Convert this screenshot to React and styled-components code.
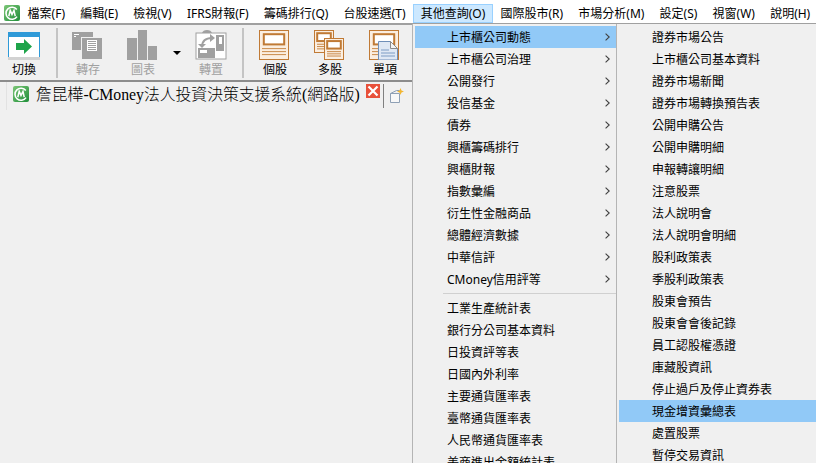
import React from 'react'
import styled, { createGlobalStyle } from 'styled-components'

const UI_FONT = '"Noto Sans", "Noto Sans CJK TC", sans-serif'

const GlobalStyle = createGlobalStyle`
  html, body {
    margin: 0;
    padding: 0;
    background: #f0f0f0;
  }
  body {
    font-family: ${UI_FONT};
    font-size: 12px;
    color: #000;
  }
`

const Page = styled.div`
  position: relative;
  width: 816px;
  height: 463px;
  overflow: hidden;
  background: #f0f0f0;
`

const MenuBar = styled.div`
  display: flex;
  align-items: flex-end;
  height: 23px;
  padding-left: 4px;
  background: #fff;
  border-bottom: 2px solid #a0a0a0;
`

const LogoSlot = styled.div`
  display: flex;
  width: 16px;
  height: 16px;
  margin-bottom: 2px;
`

const MenuTitle = styled.div`
  box-sizing: border-box;
  height: 19px;
  line-height: 17px;
  padding: 0 6.6px;
  white-space: nowrap;
  border: 1px solid ${p => (p.$open ? '#99d1ff' : 'transparent')};
  background: ${p => (p.$open ? '#cce8ff' : 'transparent')};
`

const Toolbar = styled.div`
  display: flex;
  align-items: flex-start;
  height: 57px;
  padding: 3px 0 0 8px;
  box-sizing: border-box;
  border-bottom: 2px solid #8c8c8c;
`

const ToolGroup = styled.div`
  display: flex;
  align-items: flex-start;
  gap: ${p => p.$gap}px;
`

const Tool = styled.div`
  display: flex;
  flex-direction: column;
  align-items: center;
  width: 32px;
  padding-top: 2px;
`

const ToolIcon = styled.div`
  display: flex;
  width: 32px;
  height: 30px;
`

const ToolLabel = styled.div`
  margin-top: 1px;
  line-height: 17px;
  white-space: nowrap;
  color: ${p => (p.$disabled ? '#a0a0a0' : '#000')};
`

const Divider = styled.div`
  width: 2px;
  height: 50px;
  margin: 0 ${p => p.$right}px 0 ${p => p.$left}px;
  background: #c4c4c4;
`

const Caret = styled.div`
  width: 0;
  height: 0;
  margin-top: 23px;
  border-left: 4px solid transparent;
  border-right: 4px solid transparent;
  border-top: 4px solid #000;
`

const TabStrip = styled.div`
  display: flex;
  align-items: flex-start;
  height: 26px;
  margin-left: 6px;
  padding: 2px 0 0 6px;
  border-left: 1px solid #e2e2e2;
`

const TabLogo = styled.div`
  display: flex;
  width: 16px;
  height: 16px;
  margin-top: 2px;
`

const TabTitle = styled.div`
  width: 330px;
  margin-left: 7px;
  font-family: "Liberation Serif", "Noto Sans CJK TC", serif;
  font-size: 15.8px;
  font-weight: 300;
  line-height: 22px;
  white-space: nowrap;
`

const TabClose = styled.div`
  display: flex;
  width: 14px;
  height: 14px;
`

const TabDivider = styled.div`
  width: 1px;
  height: 24px;
  margin: 0 6px 0 3px;
  background: #808080;
`

const NewTab = styled.div`
  display: flex;
  width: 15px;
  height: 15px;
  margin-top: 4px;
`

const Dropdown = styled.div`
  position: absolute;
  top: 24px;
  left: ${p => p.$left}px;
  bottom: 0;
  width: ${p => p.$width}px;
  box-sizing: border-box;
  padding: 2px 0 0 2px;
  background: #f0f0f0;
  border-left: 1px solid #b4b4b4;
`

const Row = styled.div`
  display: flex;
  align-items: center;
  justify-content: space-between;
  height: 22px;
  padding: 0 6px 0 ${p => p.$indent}px;
  white-space: nowrap;
  background: ${p => (p.$active ? '#91c9f7' : 'transparent')};
`

const Rule = styled.div`
  height: 1px;
  margin: 3px 0 3px 28px;
  background: #d0d0d0;
`

const Logo = () => (
  <svg width="16" height="16" viewBox="0 0 16 16">
    <defs>
      <linearGradient id="logoFill" x1="0" y1="0" x2="1" y2="1">
        <stop offset="0" stopColor="#7cc576" />
        <stop offset="1" stopColor="#1f8f3a" />
      </linearGradient>
    </defs>
    <rect width="16" height="16" rx="2" fill="url(#logoFill)" />
    <path d="M12.8 4.6A6 6 0 1 0 13 11.6" fill="none" stroke="#fff" strokeWidth="1.6" />
    <path d="M4.8 11.2 6.2 5.4 8 9.4 10 5.4 11.2 11.2" fill="none" stroke="#fff" strokeWidth="1.5" />
  </svg>
)

const SwitchIcon = () => (
  <svg width="32" height="30" viewBox="0 0 32 30">
    <rect x="0" y="2" width="32" height="28" fill="#d2d2d2" />
    <rect x="0" y="2" width="32" height="25" fill="#fff" />
    <rect x="0" y="2" width="32" height="5" fill="#2f9ad8" />
    <rect x="0" y="7" width="1" height="20" fill="#2f9ad8" />
    <rect x="31" y="7" width="1" height="20" fill="#2f9ad8" />
    <path d="M8 13h8V9l8 7.500-8 7.500v-4H8z" fill="#1ea44a" />
  </svg>
)

const SaveIcon = () => (
  <svg width="32" height="30" viewBox="0 0 32 30">
    <rect x="0" y="2" width="21" height="18" fill="#a0a0a0" />
    <rect x="2" y="4" width="5" height="1" fill="#fff" />
    <rect x="2" y="6" width="2" height="1" fill="#fff" />
    <rect x="9.500" y="7.500" width="21" height="22" fill="#a0a0a0" stroke="#f0f0f0" />
    <rect x="15" y="10" width="10" height="11" fill="#fff" />
    <path d="M16 11.500h8M16 13.500h8M16 15.500h8M16 17.500h8M16 19.500h8" stroke="#a0a0a0" />
  </svg>
)

const ChartIcon = () => (
  <svg width="32" height="30" viewBox="0 0 32 30">
    <rect x="0" y="8" width="10" height="22" fill="#a0a0a0" />
    <rect x="11" y="0" width="9" height="30" fill="#a0a0a0" />
    <rect x="21" y="16" width="9" height="14" fill="#a0a0a0" />
  </svg>
)

const PivotIcon = () => (
  <svg width="32" height="30" viewBox="0 0 32 30">
    <rect x="1" y="3" width="30" height="26" fill="#fff" stroke="#a0a0a0" />
    <path d="M7 3q1-3 5-3t5 3z" fill="#a0a0a0" />
    <rect x="21" y="5" width="8" height="16" fill="#a0a0a0" />
    <rect x="24" y="7" width="3" height="7" fill="#fff" />
    <rect x="3" y="18" width="17" height="10" fill="#a0a0a0" />
    <rect x="5" y="20" width="7" height="3" fill="#fff" />
    <path d="M7 17q0-9 10-9" fill="none" stroke="#a0a0a0" strokeWidth="2" />
    <path d="M15 4l5 4-5 4zM3 14h8l-4 4z" fill="#a0a0a0" />
  </svg>
)

const Sheet = ({ x, y, w, h }) => (
  <g>
    <rect x={x + 0.5} y={y + 0.5} width={w - 1} height={h - 1} fill="#fbeee0" stroke="#c07a35" />
    <rect x={x + w * 0.16} y={y + h * 0.14} width={w * 0.68} height={h * 0.34} fill="#fff" stroke="#c07a35" strokeWidth="2" />
    <path
      d={`M${x + 3} ${y + h * 0.62}h${w - 6}M${x + 3} ${y + h * 0.72}h${w - 6}M${x + 3} ${y + h * 0.82}h${w - 6}`}
      stroke="#c98a4c"
    />
  </g>
)

const SingleIcon = () => (
  <svg width="32" height="30" viewBox="0 0 32 30">
    <Sheet x={0} y={0} w={30} h={30} />
  </svg>
)

const MultiIcon = () => (
  <svg width="32" height="30" viewBox="0 0 32 30">
    <Sheet x={0} y={0} w={20} h={23} />
    <Sheet x={10} y={8} w={20} h={22} />
  </svg>
)

const ItemIcon = () => (
  <svg width="32" height="30" viewBox="0 0 32 30">
    <Sheet x={0} y={0} w={30} h={30} />
    <path d="M9.500 11.500h12l7 7v11.500h-19z" fill="#dfe8f4" stroke="#6f8fb8" />
    <path d="M21.500 11.500v7h7z" fill="#f4f4f4" stroke="#8a8a8a" />
    <path d="M12 20h8M12 23h14M12 26h14" stroke="#7d9cc4" />
  </svg>
)

const CloseIcon = () => (
  <svg width="14" height="14" viewBox="0 0 14 14">
    <rect width="14" height="14" fill="#e8503a" />
    <path d="M2.500 2.500 11.500 11.500M11.500 2.500 2.500 11.500" stroke="#fff" strokeWidth="2.200" />
  </svg>
)

const NewTabIcon = () => (
  <svg width="15" height="15" viewBox="0 0 15 15">
    <path d="M.5 5.500h9v9h-9z" fill="#f8f8f8" stroke="#8fa0b5" />
    <path d="M9.500 2.500h-3l-6 3" fill="none" stroke="#8fa0b5" />
    <path d="M10.500 0l1 2.500 2.500 1-2.500 1-1 2.500-1-2.500-2.500-1 2.500-1z" fill="#f2b632" />
  </svg>
)

const Chevron = () => (
  <svg width="5" height="8" viewBox="0 0 5 8">
    <path d="M.6.6 4.200 4 .6 7.400" fill="none" stroke="#404040" strokeWidth="1.100" />
  </svg>
)

const menus = [
  '檔案(F)', '編輯(E)', '檢視(V)', 'IFRS財報(F)', '籌碼排行(Q)', '台股速選(T)',
  '其他查詢(O)', '國際股市(R)', '市場分析(M)', '設定(S)', '視窗(W)', '說明(H)'
]

const groupItems = [
  '上市櫃公司動態', '上市櫃公司治理', '公開發行', '投信基金', '債券', '興櫃籌碼排行',
  '興櫃財報', '指數彙編', '衍生性金融商品', '總體經濟數據', '中華信評', 'CMoney信用評等'
]

const plainItems = [
  '工業生產統計表', '銀行分公司基本資料', '日投資評等表', '日國內外利率',
  '主要通貨匯率表', '臺幣通貨匯率表', '人民幣通貨匯率表', '美商進出金額統計表'
]

const subItems = [
  '證券市場公告', '上市櫃公司基本資料', '證券市場新聞', '證券市場轉換預告表', '公開申購公告',
  '公開申購明細', '申報轉讓明細', '注意股票', '法人說明會', '法人說明會明細', '股利政策表',
  '季股利政策表', '股東會預告', '股東會會後記錄', '員工認股權憑證', '庫藏股資訊',
  '停止過戶及停止資券表', '現金增資彙總表', '處置股票', '暫停交易資訊'
]

const ToolButton = ({ icon, label, disabled }) => (
  <Tool>
    <ToolIcon>{icon}</ToolIcon>
    <ToolLabel $disabled={disabled}>{label}</ToolLabel>
  </Tool>
)

export default function App() {
  return (
    <Page>
      <GlobalStyle />

      <MenuBar>
        <LogoSlot>
          <Logo />
        </LogoSlot>
        {menus.map(name => (
          <MenuTitle key={name} $open={name === '其他查詢(O)'}>
            {name}
          </MenuTitle>
        ))}
      </MenuBar>

      <Toolbar>
        <ToolButton icon={<SwitchIcon />} label="切換" />
        <Divider $left={16} $right={14} />
        <ToolGroup $gap={23}>
          <ToolButton icon={<SaveIcon />} label="轉存" disabled />
          <ToolGroup $gap={14}>
            <ToolButton icon={<ChartIcon />} label="圖表" disabled />
            <Caret />
            <ToolButton icon={<PivotIcon />} label="轉置" disabled />
          </ToolGroup>
        </ToolGroup>
        <Divider $left={15} $right={15} />
        <ToolGroup $gap={23}>
          <ToolButton icon={<SingleIcon />} label="個股" />
          <ToolButton icon={<MultiIcon />} label="多股" />
          <ToolButton icon={<ItemIcon />} label="單項" />
        </ToolGroup>
      </Toolbar>

      <TabStrip>
        <TabLogo>
          <Logo />
        </TabLogo>
        <TabTitle>詹昆樺-CMoney法人投資決策支援系統(網路版)</TabTitle>
        <TabClose>
          <CloseIcon />
        </TabClose>
        <TabDivider />
        <NewTab>
          <NewTabIcon />
        </NewTab>
      </TabStrip>

      <Dropdown $left={412} $width={204}>
        {groupItems.map((name, i) => (
          <Row key={name} $indent={32} $active={i === 0}>
            {name}
            <Chevron />
          </Row>
        ))}
        <Rule />
        {plainItems.map(name => (
          <Row key={name} $indent={32}>
            {name}
          </Row>
        ))}
      </Dropdown>

      <Dropdown $left={616} $width={200}>
        {subItems.map(name => (
          <Row key={name} $indent={33} $active={name === '現金增資彙總表'}>
            {name}
          </Row>
        ))}
      </Dropdown>
    </Page>
  )
}
